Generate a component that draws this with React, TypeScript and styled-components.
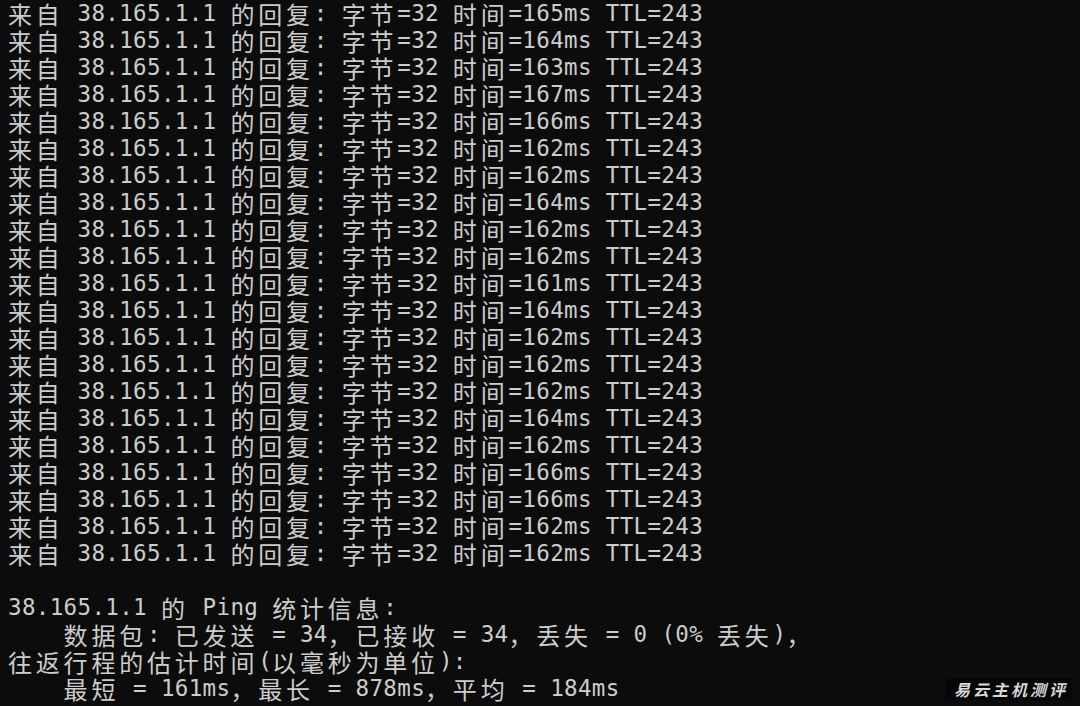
import React from 'react';
import styled, { createGlobalStyle } from 'styled-components';

const Global = createGlobalStyle`
  html, body { margin: 0; padding: 0; background: #0c0c0c; }
  #root { width: 1080px; height: 706px; }
`;

const Terminal = styled.div`
  position: relative;
  width: 1080px;
  height: 706px;
  overflow: hidden;
  box-sizing: border-box;
  padding: 0 0 0 8px;
  background: #0c0c0c;
  color: #cccccc;
`;

const Line = styled.div`
  height: 27px;
  line-height: 27px;
  white-space: pre;
  font-family: "DejaVu Sans Mono", "Liberation Mono", monospace;
  font-size: 22.5px;
  letter-spacing: 0.354px;
`;

const Wide = styled.span`
  display: inline-block;
  height: 27px;
  line-height: 27px;
  vertical-align: top;
  font-family: "Noto Sans CJK SC", sans-serif;
  font-size: 24px;
  letter-spacing: 3.8px;
`;

const Watermark = styled.div`
  position: absolute;
  right: 8px;
  bottom: 6px;
  padding: 2px 4px 2px 8px;
  line-height: 18px;
  font-family: "Noto Sans CJK SC", sans-serif;
  font-weight: 700;
  font-style: italic;
  font-size: 16px;
  letter-spacing: 3px;
  color: #d8d8d8;
  text-shadow: 1px 1px 1px #000;
  background: rgba(0, 0, 0, 0.35);
`;

const isWide = (ch: string) => ch.charCodeAt(0) >= 0x2e80;

function splitRuns(text: string) {
  const runs: { wide: boolean; text: string }[] = [];
  for (const ch of text) {
    const w = isWide(ch);
    const last = runs[runs.length - 1];
    if (last && last.wide === w) last.text += ch;
    else runs.push({ wide: w, text: ch });
  }
  return runs;
}

const TermLine: React.FC<{ text: string }> = ({ text }) => (
  <Line>
    {text === ''
      ? ' '
      : splitRuns(text).map((r, i) =>
          r.wide ? <Wide key={i}>{r.text}</Wide> : <React.Fragment key={i}>{r.text}</React.Fragment>
        )}
  </Line>
);

const times = [165, 164, 163, 167, 166, 162, 162, 164, 162, 162, 161, 164, 162, 162, 162, 164, 162, 166, 166, 162, 162];

const lines: string[] = [
  ...times.map((t) => `来自 38.165.1.1 的回复: 字节=32 时间=${t}ms TTL=243`),
  '',
  '38.165.1.1 的 Ping 统计信息:',
  '    数据包: 已发送 = 34，已接收 = 34，丢失 = 0 (0% 丢失)，',
  '往返行程的估计时间(以毫秒为单位):',
  '    最短 = 161ms，最长 = 878ms，平均 = 184ms',
];

export default function App() {
  return (
    <>
      <Global />
      <Terminal>
        {lines.map((l, i) => (
          <TermLine key={i} text={l} />
        ))}
        <Watermark>易云主机测评</Watermark>
      </Terminal>
    </>
  );
}
